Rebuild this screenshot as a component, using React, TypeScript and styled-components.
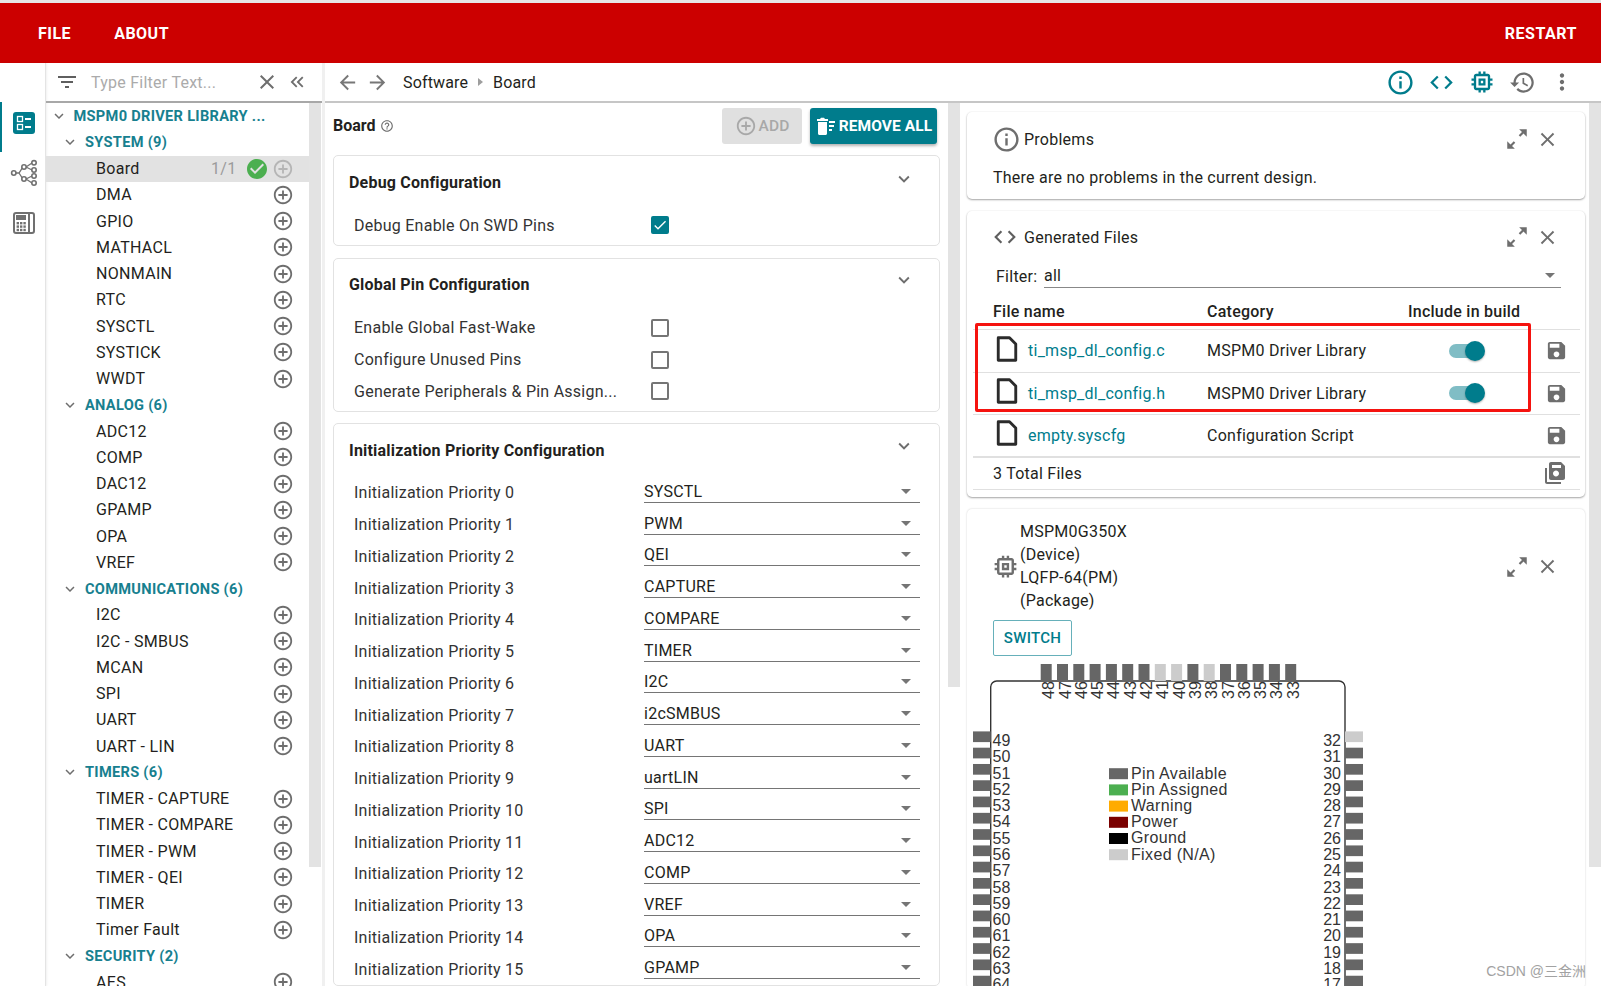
import React from "react";
import styled, { createGlobalStyle } from "styled-components";

const TEAL = "#007c8c";
const INK = "#231f20";
const GREY = "#6e6e6e";

const Global = createGlobalStyle`
  html, body { margin: 0; padding: 0; background: #fff; }
  body { font-family: Roboto, "Noto Sans CJK SC", sans-serif; font-size: 16px; color: ${INK}; letter-spacing: 0.25px; }
  * { box-sizing: border-box; }
`;

const P = {
  back: "M20 11H7.83l5.59-5.59L12 4l-8 8 8 8 1.41-1.41L7.83 13H20v-2z",
  fwd: "M12 4l-1.41 1.41L16.17 11H4v2h12.17l-5.58 5.59L12 20l8-8z",
  info: "M11 7h2v2h-2zm0 4h2v6h-2zm1-9C6.48 2 2 6.48 2 12s4.48 10 10 10 10-4.48 10-10S17.52 2 12 2zm0 18c-4.41 0-8-3.59-8-8s3.59-8 8-8 8 3.59 8 8-3.59 8-8 8z",
  code: "M9.4 16.6L4.8 12l4.6-4.6L8 6l-6 6 6 6 1.4-1.4zm5.2 0l4.6-4.6-4.6-4.6L16 6l6 6-6 6-1.4-1.4z",
  chip: "M15 9H9v6h6V9zm-2 4h-2v-2h2v2zm8-2V9h-2V7c0-1.1-.9-2-2-2h-2V3h-2v2h-2V3H9v2H7c-1.1 0-2 .9-2 2v2H3v2h2v2H3v2h2v2c0 1.1.9 2 2 2h2v2h2v-2h2v2h2v-2h2c1.1 0 2-.9 2-2v-2h2v-2h-2v-2h2zm-4 6H7V7h10v10z",
  history: "M13 3c-4.97 0-9 4.03-9 9H1l3.89 3.89.07.14L9 12H6c0-3.87 3.13-7 7-7s7 3.13 7 7-3.13 7-7 7c-1.93 0-3.68-.79-4.94-2.06l-1.42 1.42C8.27 19.99 10.51 21 13 21c4.97 0 9-4.03 9-9s-4.03-9-9-9zm-1 5v5l4.28 2.54.72-1.21-3.5-2.08V8H12z",
  more: "M12 8c1.1 0 2-.9 2-2s-.9-2-2-2-2 .9-2 2 .9 2 2 2zm0 2c-1.1 0-2 .9-2 2s.9 2 2 2 2-.9 2-2-.9-2-2-2zm0 6c-1.1 0-2 .9-2 2s.9 2 2 2 2-.9 2-2-.9-2-2-2z",
  save: "M17 3H5c-1.11 0-2 .9-2 2v14c0 1.1.89 2 2 2h14c1.1 0 2-.9 2-2V7l-4-4zm-5 16c-1.66 0-3-1.34-3-3s1.34-3 3-3 3 1.34 3 3-1.34 3-3 3zm3-10H5V5h10v4z",
  saveAll: "M4 7H2v14c0 1.1.9 2 2 2h14v-2H4V7zM18 1H8c-1.1 0-2 .9-2 2v14c0 1.1.9 2 2 2h12c1.1 0 2-.9 2-2V5l-4-4zm-5 14.5c-1.66 0-3-1.34-3-3s1.34-3 3-3 3 1.34 3 3-1.34 3-3 3zM18 7H9V4h9v3z",
  expand: "M21 3h-7l2.6 2.6-3 3 1.4 1.4 3-3L21 10zM3 21h7l-2.6-2.6 3-3-1.4-1.4-3 3L3 14z",
  filter: "M10 18h4v-2h-4v2zM3 6v2h18V6H3zm3 7h12v-2H6v2z",
  check: "M12 2C6.48 2 2 6.48 2 12s4.48 10 10 10 10-4.48 10-10S17.52 2 12 2zm-2 15l-5-5 1.41-1.41L10 14.17l7.59-7.59L19 8l-9 9z",
  add: "M13 7h-2v4H7v2h4v4h2v-4h4v-2h-4V7zm-1-5C6.48 2 2 6.48 2 12s4.48 10 10 10 10-4.48 10-10S17.52 2 12 2zm0 18c-4.41 0-8-3.59-8-8s3.59-8 8-8 8 3.59 8 8-3.59 8-8 8z",
  close: "M19 6.41L17.59 5 12 10.59 6.41 5 5 6.41 10.59 12 5 17.59 6.41 19 12 13.41 17.59 19 19 17.59 13.41 12z",
  chevron: "M16.59 8.59L12 13.17 7.41 8.59 6 10l6 6 6-6z",
  dbl: "M17.59 18L19 16.59 14.42 12 19 7.41 17.59 6l-6 6zM11 18l1.41-1.41L7.83 12l4.58-4.59L11 6l-6 6z",
  help: "M11 18h2v-2h-2v2zm1-16C6.48 2 2 6.48 2 12s4.48 10 10 10 10-4.48 10-10S17.52 2 12 2zm0 18c-4.41 0-8-3.59-8-8s3.59-8 8-8 8 3.59 8 8-3.59 8-8 8zm0-14c-2.21 0-4 1.79-4 4h2c0-1.1.9-2 2-2s2 .9 2 2c0 2-3 1.75-3 5h2c0-2.25 3-2.5 3-5 0-2.21-1.79-4-4-4z",
  tick: "M9 16.2L4.8 12l-1.4 1.4L9 19 21 7l-1.4-1.4z",
};

const Svg = styled.svg<{ $size: number; $color: string; $ml?: number }>`
  width: ${(p) => p.$size}px;
  height: ${(p) => p.$size}px;
  fill: ${(p) => p.$color};
  margin-left: ${(p) => p.$ml ?? 0}px;
  flex: none;
  display: block;
`;
const Icon = ({ d, size = 24, color = GREY, ml }: { d: string; size?: number; color?: string; ml?: number }) => (
  <Svg viewBox="0 0 24 24" $size={size} $color={color} $ml={ml}><path d={d} /></Svg>
);
const FileSvg = styled.svg`
  width: 30px;
  height: 30px;
  display: block;
  margin: 0 0 4px -1px;
  fill: none;
  stroke: #2b2b2b;
  stroke-width: 2.3;
  stroke-linejoin: round;
`;
const FileIcon = () => (
  <FileSvg viewBox="0 0 24 24"><path d="M5 3h9l5 5v13H5z" /></FileSvg>
);

const Page = styled.div`
  width: 1601px;
  height: 986px;
  overflow: hidden;
  position: relative;
  display: flex;
  flex-direction: column;
  border-top: 3px solid #e6e6e6;
`;
const Header = styled.header`
  height: 60px;
  flex: none;
  background: #cc0000;
  color: #fff;
  display: flex;
  align-items: center;
  padding: 0 24px 0 38px;
  gap: 43px;
  font-weight: 700;
  font-size: 16px;
  letter-spacing: 0.5px;
`;
const Spacer = styled.div`flex: 1;`;
const Body = styled.div`
  flex: 1;
  display: flex;
  min-height: 0;
`;
const Rail = styled.nav`
  width: 46px;
  flex: none;
  padding-top: 39px;
  border-right: 1px solid #e4e4e4;
  box-shadow: 1px 0 2px rgba(0,0,0,0.06);
`;
const RailButton = styled.div<{ $active?: boolean }>`
  height: 50px;
  display: flex;
  align-items: center;
  justify-content: center;
  border-left: 2px solid ${(p) => (p.$active ? TEAL : "transparent")};
  padding-bottom: 8px;
`;
const Side = styled.aside`
  width: 276px;
  flex: none;
  display: flex;
  flex-direction: column;
  min-height: 0;
`;
const FilterBar = styled.div`
  height: 40px;
  flex: none;
  border-bottom: 2px solid #a8a8a8;
  display: flex;
  align-items: center;
  padding-left: 9px;
`;
const FilterHint = styled.span`
  margin-left: 12px;
  width: 164px;
  color: #ababab;
  font-size: 16px;
  white-space: nowrap;
`;
const FilterIcons = styled.div`
  display: flex;
  align-items: center;
  gap: 7px;
`;
const SideBody = styled.div`
  flex: 1;
  display: flex;
  min-height: 0;
`;
const Tree = styled.div`
  width: 263px;
  flex: none;
  letter-spacing: 0.3px;
`;
const Track = styled.div<{ $h: number; $w?: number }>`
  width: ${(p) => p.$w ?? 12}px;
  flex: none;
  height: ${(p) => p.$h}px;
  background: #e3e3e3;
`;
const TreeRow = styled.div<{ $level: number; $selected?: boolean }>`
  height: 26.25px;
  display: flex;
  align-items: center;
  padding-left: ${(p) => (p.$level === 2 ? 50 : p.$level === 1 ? 15 : 3.5)}px;
  padding-right: 15.5px;
  background: ${(p) => (p.$selected ? "#e2e2e2" : "transparent")};
`;
const TreeTitle = styled.span`
  margin-left: 6px;
  font-weight: 700;
  font-size: 14.6px;
  letter-spacing: 0.3px;
  color: #17808f;
  white-space: nowrap;
`;
const Grow = styled.span`flex: 1; white-space: nowrap;`;
const Count = styled.span`
  color: #9b9b9b;
  margin-right: 8px;
`;
const MainColumn = styled.div`
  flex: 1;
  min-width: 0;
  display: flex;
  flex-direction: column;
  border-left: 3px solid #f0f0f0;
`;
const TopBar = styled.div`
  height: 40px;
  flex: none;
  display: flex;
  align-items: center;
  padding-left: 11px;
  border-bottom: 2px solid #c6c6c6;
  gap: 7px;
`;
const Crumb = styled.span`
  letter-spacing: 0.15px;
`;
const CrumbArrow = styled.span`
  width: 0;
  height: 0;
  border-left: 5px solid #9e9e9e;
  border-top: 4px solid transparent;
  border-bottom: 4px solid transparent;
  margin: 0 3px;
`;
const FirstCrumb = styled(Crumb)`
  margin-left: 7px;
`;
const Tools = styled.div`
  display: flex;
  gap: 13px;
  align-items: center;
  padding-right: 26px;
`;
const Panes = styled.div`
  flex: 1;
  display: flex;
  min-height: 0;
`;
const CenterPane = styled.section`
  width: 623px;
  flex: none;
  padding: 0 8px;
  overflow: hidden;
`;
const BoardHead = styled.div`
  height: 52px;
  display: flex;
  align-items: center;
  padding: 0 3px 7px 0;
`;
const BoardName = styled.span`
  font-weight: 700;
  letter-spacing: 0;
  margin-right: 4px;
`;
const FilledButton = styled.div`
  height: 36px;
  border-radius: 3px;
  background: ${TEAL};
  color: #fff;
  font-weight: 700;
  font-size: 15.5px;
  letter-spacing: 0.1px;
  display: flex;
  align-items: center;
  justify-content: center;
  width: 127px;
  box-shadow: 0 2px 3px rgba(0,0,0,0.3);
`;
const DisabledButton = styled(FilledButton)`
  background: #e0e0e0;
  color: #a8a8a8;
  font-weight: 500;
  box-shadow: none;
  width: 80px;
  margin-right: 8px;
  gap: 2px;
`;
const Card = styled.div<{ $mb?: number; $pb?: number }>`
  border: 1px solid #e2e2e2;
  border-radius: 5px;
  padding: 0 19px ${(p) => p.$pb ?? 0}px 15px;
  margin-bottom: ${(p) => p.$mb ?? 11}px;
`;
const CardHead = styled.div<{ $h: number; $pb?: number }>`
  height: ${(p) => p.$h}px;
  display: flex;
  align-items: center;
  justify-content: space-between;
  font-weight: 700;
  letter-spacing: 0.2px;
  padding-bottom: ${(p) => p.$pb ?? 0}px;
`;
const HeadChevron = styled.div`
  transform: translateY(-4px);
  margin-right: 5px;
`;
const FieldRow = styled.div<{ $h: number }>`
  height: ${(p) => p.$h}px;
  display: flex;
  align-items: center;
  padding-left: 5px;
  color: #333;
`;
const FieldLabel = styled.div<{ $w: number }>`
  width: ${(p) => p.$w}px;
  flex: none;
  white-space: nowrap;
`;
const Checkbox = styled.div<{ $on?: boolean }>`
  width: 18px;
  height: 18px;
  border-radius: 2px;
  border: 2px solid ${(p) => (p.$on ? TEAL : "#757575")};
  background: ${(p) => (p.$on ? TEAL : "#fff")};
  display: flex;
  align-items: center;
  justify-content: center;
`;
const Select = styled.div`
  flex: 1;
  height: 22px;
  align-self: flex-end;
  margin-bottom: 6px;
  border-bottom: 1.5px solid #757575;
  display: flex;
  align-items: center;
  justify-content: space-between;
  padding-right: 9px;
  color: ${INK};
`;
const Caret = styled.span`
  width: 0;
  height: 0;
  border-left: 5.5px solid transparent;
  border-right: 5.5px solid transparent;
  border-top: 5.5px solid #757575;
`;
const RightPane = styled.section`
  flex: 1;
  min-width: 0;
  padding: 9px 4px 0 7px;
  overflow: hidden;
  display: flex;
  flex-direction: column;
  gap: 12px;
`;
const Panel = styled.div<{ $h: number }>`
  height: ${(p) => p.$h}px;
  flex: none;
  border-radius: 5px;
  box-shadow: 0 1px 2px rgba(0,0,0,0.35), 0 0 2px rgba(0,0,0,0.07);
  padding: 0 5px 0 6px;
`;
const OpenPanel = styled(Panel)`
  box-shadow: 0 0 2px rgba(0,0,0,0.2);
  overflow: hidden;
`;
const PanelHead = styled.div<{ $h: number; $gap: number }>`
  height: ${(p) => p.$h}px;
  display: flex;
  align-items: center;
  padding-left: 19px;
  gap: ${(p) => p.$gap}px;
`;
const PanelTitle = styled.span`flex: 1;`;
const PanelActions = styled.div`
  display: flex;
  align-items: center;
  gap: 6px;
  padding-right: 21px;
`;
const Note = styled.div`
  padding-left: 20px;
  margin-top: 2px;
  line-height: 20px;
`;
const FilterRow = styled.div`
  display: flex;
  align-items: center;
  height: 26px;
  padding-left: 23px;
`;
const FilterLabel = styled.span`width: 48px; flex: none;`;
const FilterSelect = styled.div`
  width: 517px;
  height: 24px;
  border-bottom: 1px solid #888;
  display: flex;
  align-items: center;
  justify-content: space-between;
  padding-right: 6px;
  line-height: 1;
`;
const TableHead = styled.div`
  display: grid;
  grid-template-columns: 214px 201px 1fr;
  height: 41px;
  align-items: flex-end;
  padding: 0 0 8px 20px;
  font-weight: 500;
  border-bottom: 1px solid #e0e0e0;
`;
const FileRow = styled.div<{ $thick?: boolean }>`
  height: 42.6px;
  display: grid;
  grid-template-columns: 22px 192px 202px 1fr 48px;
  align-items: center;
  padding-left: 20px;
  border-bottom: ${(p) => (p.$thick ? 2 : 1)}px solid #e0e0e0;
`;
const FileLink = styled.span`
  color: ${TEAL};
  padding-left: 13px;
  white-space: nowrap;
`;
const SaveCell = styled.div`
  display: flex;
  justify-content: center;
`;
const Toggle = styled.div`
  width: 36px;
  height: 22px;
  margin-left: 40px;
  position: relative;
  display: flex;
  align-items: center;
`;
const ToggleTrack = styled.div`
  width: 32px;
  height: 14px;
  border-radius: 7px;
  background: #80bdc5;
`;
const ToggleThumb = styled.div`
  position: absolute;
  right: 0;
  top: 1px;
  width: 20px;
  height: 20px;
  border-radius: 50%;
  background: ${TEAL};
  box-shadow: 0 1px 2px rgba(0,0,0,0.3);
`;
const TotalRow = styled.div`
  height: 32px;
  display: flex;
  align-items: center;
  justify-content: space-between;
  padding: 0 13px 0 20px;
  border-bottom: 1px solid #e0e0e0;
`;
const Highlight = styled.div`
  position: absolute;
  left: 975px;
  top: 320px;
  width: 556px;
  height: 89px;
  border: 3px solid #f5130f;
  border-radius: 2px;
  pointer-events: none;
`;
const DeviceHead = styled.div`
  display: flex;
  align-items: center;
  padding: 12px 0 0 18px;
`;
const DeviceText = styled.div`
  flex: 1;
  line-height: 22.9px;
`;
const SwitchButton = styled.div`
  width: 79px;
  height: 36px;
  margin: 7px 0 8px 20px;
  border: 1px solid #66b0ba;
  border-radius: 2px;
  color: ${TEAL};
  font-weight: 500;
  font-size: 15px;
  letter-spacing: 0.3px;
  display: flex;
  align-items: center;
  justify-content: center;
`;
const ChipSvg = styled.svg`
  display: block;
  font-family: "Liberation Sans", Arial, sans-serif;
  font-size: 16px;
  letter-spacing: 0;
  fill: #333;
`;
const LegendLabel = styled.text`
  letter-spacing: 0.35px;
`;
const Watermark = styled.div`
  position: absolute;
  right: 15px;
  bottom: 6px;
  font-size: 14px;
  letter-spacing: 0;
  color: #a2a2a2;
  font-family: "Liberation Sans", "Noto Sans CJK SC", sans-serif;
`;

const sections: { title: string; items: string[] }[] = [
  { title: "SYSTEM (9)", items: ["Board", "DMA", "GPIO", "MATHACL", "NONMAIN", "RTC", "SYSCTL", "SYSTICK", "WWDT"] },
  { title: "ANALOG (6)", items: ["ADC12", "COMP", "DAC12", "GPAMP", "OPA", "VREF"] },
  { title: "COMMUNICATIONS (6)", items: ["I2C", "I2C - SMBUS", "MCAN", "SPI", "UART", "UART - LIN"] },
  { title: "TIMERS (6)", items: ["TIMER - CAPTURE", "TIMER - COMPARE", "TIMER - PWM", "TIMER - QEI", "TIMER", "Timer Fault"] },
  { title: "SECURITY (2)", items: ["AES"] },
];

const priorities = ["SYSCTL", "PWM", "QEI", "CAPTURE", "COMPARE", "TIMER", "I2C", "i2cSMBUS", "UART", "uartLIN", "SPI", "ADC12", "COMP", "VREF", "OPA", "GPAMP"];

const ChecklistIcon = () => (
  <svg width="22" height="22" viewBox="0 0 22 22">
    <rect width="22" height="22" rx="3" fill={TEAL} />
    <rect x="4.500" y="4.500" width="5" height="5" fill="none" stroke="#fff" strokeWidth="1.3" />
    <rect x="4.500" y="12.500" width="5" height="5" fill="none" stroke="#fff" strokeWidth="1.3" />
    <rect x="12" y="6" width="6" height="2" fill="#fff" />
    <rect x="12" y="14" width="6" height="2" fill="#fff" />
  </svg>
);
const NodesIcon = () => (
  <svg width="28" height="28" viewBox="0 0 28 28" fill="none" stroke="#707070" strokeWidth="1.6">
    <path d="M5 14h4l4-6h3M9 14l4 6h3M16 8l6-4M16 8l6 3M16 20l6-3M16 20l6 4" strokeWidth="1.3" />
    <circle cx="3.800" cy="14" r="2.200" fill="#fff" />
    <circle cx="14" cy="8" r="2.200" fill="#fff" />
    <circle cx="14" cy="20" r="2.200" fill="#fff" />
    <circle cx="24" cy="3.800" r="2.200" fill="#fff" />
    <circle cx="24" cy="11" r="2.200" fill="#fff" />
    <circle cx="24" cy="17" r="2.200" fill="#fff" />
    <circle cx="24" cy="24" r="2.200" fill="#fff" />
  </svg>
);
const CalcIcon = () => (
  <svg width="22" height="22" viewBox="0 0 22 22">
    <rect x="1" y="1" width="20" height="20" rx="2" fill="none" stroke="#707070" strokeWidth="2" />
    <rect x="15" y="1" width="2" height="20" fill="#707070" />
    <rect x="3" y="3" width="10" height="5" fill="#707070" />
    {[0, 1, 2].map((r) =>
      [0, 1, 2].map((c) => <rect key={`${r}${c}`} x={3.6 + c * 3.4} y={10 + r * 3.4} width="2.4" height="2.4" fill="#707070" />)
    )}
  </svg>
);
const RemoveSvg = styled.svg`
  width: 22px;
  height: 22px;
  fill: #fff;
  margin-right: 2px;
`;
const RemoveIcon = () => (
  <RemoveSvg viewBox="0 0 22 22">
    <path d="M3 7h9v11.500c0 .8-.6 1.500-1.500 1.500h-6c-.8 0-1.500-.7-1.500-1.500zM2 4h3l1-1.200h3L10 4h3v2H2z" />
    <rect x="14" y="6" width="6" height="2" />
    <rect x="14" y="10" width="5" height="2" />
    <rect x="14" y="14" width="3" height="2" />
  </RemoveSvg>
);

const OY = 663;
const OX = 973;
const PITCH = 16.29;
const topPins = Array.from({ length: 16 }, (_, i) => 48 - i);
const sidePins = Array.from({ length: 16 }, (_, i) => i);
const legend = [
  ["Pin Available", "#666666"],
  ["Pin Assigned", "#4caf50"],
  ["Warning", "#ffab00"],
  ["Power", "#7a0000"],
  ["Ground", "#000000"],
  ["Fixed (N/A)", "#cccccc"],
];
const ChipDiagram = () => (
  <ChipSvg width="400" height="340" viewBox="0 0 400 340">
    <rect x={17.7} y={17} width={354.3} height={400} rx={6} fill="#fff" stroke="#333" strokeWidth={1.4} />
    {topPins.map((n, i) => {
      const x = 1040.7 - OX + i * 16.3;
      const fixed = n === 41 || n === 40 || n === 38;
      return (
        <g key={n}>
          <rect x={x} y={0} width={11} height={17} fill={fixed ? "#cccccc" : "#666666"} />
          <text transform={`translate(${x + 13.5},35) rotate(-90)`}>{n}</text>
        </g>
      );
    })}
    {sidePins.map((i) => {
      const y = 730.4 - OY + i * PITCH;
      return (
        <g key={i}>
          <rect x={0} y={y} width={17.7} height={10.7} fill="#666666" />
          <text x={19.5} y={y + 14.6}>{49 + i}</text>
          <rect x={372} y={y} width={18} height={10.7} fill={i === 0 ? "#cccccc" : "#666666"} />
          <text x={368} y={y + 14.6} textAnchor="end">{32 - i}</text>
        </g>
      );
    })}
    {legend.map(([label, color], i) => (
      <g key={label}>
        <rect x={136} y={104.2 + i * 16.2} width={19} height={11} fill={color} />
        <LegendLabel x={158} y={114.5 + i * 16.2}>{label}</LegendLabel>
      </g>
    ))}
  </ChipSvg>
);

export default function App() {
  return (
    <Page>
      <Global />
      <Header>
        <span>FILE</span>
        <span>ABOUT</span>
        <Spacer />
        <span>RESTART</span>
      </Header>
      <Body>
        <Rail>
          <RailButton $active><ChecklistIcon /></RailButton>
          <RailButton><NodesIcon /></RailButton>
          <RailButton><CalcIcon /></RailButton>
        </Rail>
        <Side>
          <FilterBar>
            <Icon d={P.filter} size={24} color="#5f5f5f" />
            <FilterHint>Type Filter Text...</FilterHint>
            <FilterIcons>
              <Icon d={P.close} size={24} />
              <Icon d={P.dbl} size={22} />
            </FilterIcons>
          </FilterBar>
          <SideBody>
            <Tree>
              <TreeRow $level={0}>
                <Icon d={P.chevron} size={18} />
                <TreeTitle>MSPM0 DRIVER LIBRARY ...</TreeTitle>
              </TreeRow>
              {sections.map((s) => (
                <React.Fragment key={s.title}>
                  <TreeRow $level={1}>
                    <Icon d={P.chevron} size={18} />
                    <TreeTitle>{s.title}</TreeTitle>
                  </TreeRow>
                  {s.items.map((item) => (
                    <TreeRow $level={2} $selected={item === "Board"} key={item}>
                      <Grow>{item}</Grow>
                      {item === "Board" && <Count>1/1</Count>}
                      {item === "Board" && <Icon d={P.check} size={24} color="#4caf50" />}
                      <Icon d={P.add} size={22} color={item === "Board" ? "#b5b5b5" : GREY} ml={item === "Board" ? 3 : 0} />
                    </TreeRow>
                  ))}
                </React.Fragment>
              ))}
            </Tree>
            <Track $h={764} />
          </SideBody>
        </Side>
        <MainColumn>
          <TopBar>
            <Icon d={P.back} size={23} color="#777" />
            <Icon d={P.fwd} size={23} color="#777" />
            <FirstCrumb>Software</FirstCrumb>
            <CrumbArrow />
            <Crumb>Board</Crumb>
            <Spacer />
            <Tools>
              <Icon d={P.info} size={29} color={TEAL} />
              <Icon d={P.code} size={27} color={TEAL} />
              <Icon d={P.chip} size={28} color={TEAL} />
              <Icon d={P.history} size={27} />
              <Icon d={P.more} size={26} />
            </Tools>
          </TopBar>
          <Panes>
            <CenterPane>
              <BoardHead>
                <BoardName>Board</BoardName>
                <Icon d={P.help} size={14} />
                <Spacer />
                <DisabledButton>
                  <Icon d={P.add} size={22} color="#a8a8a8" />
                  ADD
                </DisabledButton>
                <FilledButton>
                  <RemoveIcon />
                  REMOVE ALL
                </FilledButton>
              </BoardHead>
              <Card $pb={4} $mb={12}>
                <CardHead $h={53}>
                  Debug Configuration
                  <HeadChevron><Icon d={P.chevron} size={22} /></HeadChevron>
                </CardHead>
                <FieldRow $h={32}>
                  <FieldLabel $w={297}>Debug Enable On SWD Pins</FieldLabel>
                  <Checkbox $on><Icon d={P.tick} size={16} color="#fff" /></Checkbox>
                </FieldRow>
              </Card>
              <Card $pb={4}>
                <CardHead $h={53} $pb={3}>
                  Global Pin Configuration
                  <HeadChevron><Icon d={P.chevron} size={22} /></HeadChevron>
                </CardHead>
                <FieldRow $h={31.7}>
                  <FieldLabel $w={297}>Enable Global Fast-Wake</FieldLabel>
                  <Checkbox />
                </FieldRow>
                <FieldRow $h={31.7}>
                  <FieldLabel $w={297}>Configure Unused Pins</FieldLabel>
                  <Checkbox />
                </FieldRow>
                <FieldRow $h={31.7}>
                  <FieldLabel $w={297}>Generate Peripherals &amp; Pin Assign...</FieldLabel>
                  <Checkbox />
                </FieldRow>
              </Card>
              <Card $mb={0}>
                <CardHead $h={53} $pb={1}>
                  Initialization Priority Configuration
                  <HeadChevron><Icon d={P.chevron} size={22} /></HeadChevron>
                </CardHead>
                {priorities.map((v, i) => (
                  <FieldRow $h={31.75} key={i}>
                    <FieldLabel $w={290}>{`Initialization Priority ${i}`}</FieldLabel>
                    <Select>{v}<Caret /></Select>
                  </FieldRow>
                ))}
              </Card>
            </CenterPane>
            <Track $h={584} />
            <RightPane>
              <Panel $h={87}>
                <PanelHead $h={54} $gap={3}>
                  <Icon d={P.info} size={29} />
                  <PanelTitle>Problems</PanelTitle>
                  <PanelActions>
                    <Icon d={P.expand} size={26} />
                    <Icon d={P.close} size={23} />
                  </PanelActions>
                </PanelHead>
                <Note>There are no problems in the current design.</Note>
              </Panel>
              <Panel $h={286}>
                <PanelHead $h={52} $gap={6}>
                  <Icon d={P.code} size={26} color="#5f5f5f" />
                  <PanelTitle>Generated Files</PanelTitle>
                  <PanelActions>
                    <Icon d={P.expand} size={26} />
                    <Icon d={P.close} size={23} />
                  </PanelActions>
                </PanelHead>
                <FilterRow>
                  <FilterLabel>Filter:</FilterLabel>
                  <FilterSelect>all<Caret /></FilterSelect>
                </FilterRow>
                <TableHead>
                  <span>File name</span>
                  <span>Category</span>
                  <span>Include in build</span>
                </TableHead>
                <FileRow>
                  <FileIcon />
                  <FileLink>ti_msp_dl_config.c</FileLink>
                  <span>MSPM0 Driver Library</span>
                  <Toggle><ToggleTrack /><ToggleThumb /></Toggle>
                  <SaveCell><Icon d={P.save} size={23} /></SaveCell>
                </FileRow>
                <FileRow>
                  <FileIcon />
                  <FileLink>ti_msp_dl_config.h</FileLink>
                  <span>MSPM0 Driver Library</span>
                  <Toggle><ToggleTrack /><ToggleThumb /></Toggle>
                  <SaveCell><Icon d={P.save} size={23} /></SaveCell>
                </FileRow>
                <FileRow $thick>
                  <FileIcon />
                  <FileLink>empty.syscfg</FileLink>
                  <span>Configuration Script</span>
                  <span />
                  <SaveCell><Icon d={P.save} size={23} /></SaveCell>
                </FileRow>
                <TotalRow>
                  <span>3 Total Files</span>
                  <Icon d={P.saveAll} size={24} />
                </TotalRow>
              </Panel>
              <OpenPanel $h={480}>
                <DeviceHead>
                  <Icon d={P.chip} size={29} />
                  <DeviceText>MSPM0G350X<br />(Device)<br />LQFP-64(PM)<br />(Package)</DeviceText>
                  <PanelActions>
                    <Icon d={P.expand} size={26} />
                    <Icon d={P.close} size={23} />
                  </PanelActions>
                </DeviceHead>
                <SwitchButton>SWITCH</SwitchButton>
                <ChipDiagram />
              </OpenPanel>
            </RightPane>
            <Track $h={764} $w={12} />
          </Panes>
        </MainColumn>
      </Body>
      <Highlight />
      <Watermark>CSDN @三金洲</Watermark>
    </Page>
  );
}
